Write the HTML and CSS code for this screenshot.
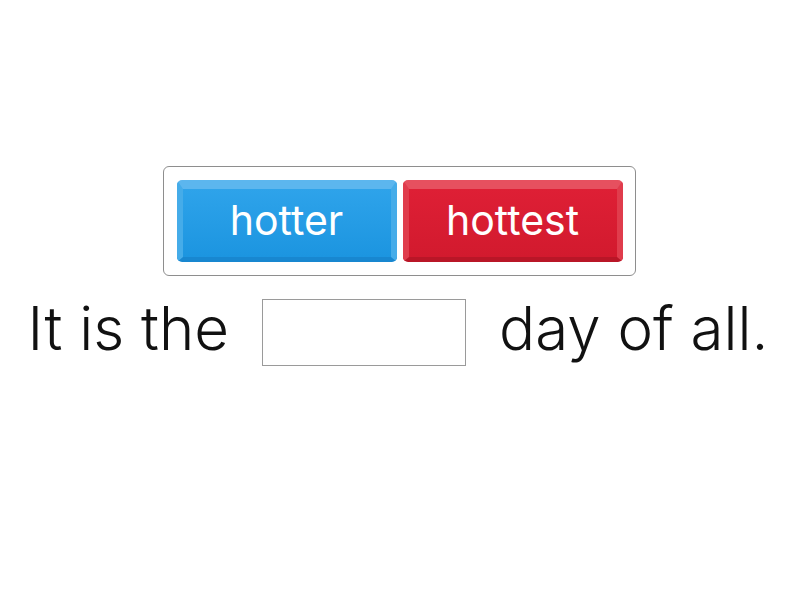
FILE: index.html
```html
<!DOCTYPE html>
<html>
<head>
<meta charset="utf-8">
<link rel="stylesheet" href="styles.css">
</head>
<body>
<main class="page">
  <div class="choices">
    <div class="btn btn-blue"><span>hotter</span></div>
    <div class="btn btn-red"><span>hottest</span></div>
  </div>
  <div class="sentence">
    <span class="word">It is the</span>
    <span class="blank"></span>
    <span class="word">day of all.</span>
  </div>
</main>
</body>
</html>
```
FILE: styles.css
```css
html, body {
  margin: 0;
  padding: 0;
  background: #fff;
}
.page {
  width: 800px;
  height: 600px;
  display: flex;
  flex-direction: column;
  align-items: center;
  padding-top: 166px;
  box-sizing: border-box;
  font-family: "Inter", "Noto Sans", sans-serif;
  font-variant-ligatures: none;
}
.choices {
  display: flex;
  gap: 6px;
  padding: 13px 12px 13px 13px;
  border: 1px solid #8e8e8e;
  border-radius: 6px;
  transform: translateX(-1px);
}
.btn {
  width: 220px;
  height: 82px;
  box-sizing: border-box;
  border-radius: 5px;
  border-style: solid;
  border-width: 9px 6px 5px 6px;
  display: flex;
  align-items: center;
  justify-content: center;
  color: #fff;
  font-size: 41px;
  font-weight: 400;
  padding-bottom: 7px;
}
.btn-blue {
  background: linear-gradient(#2ea3ea, #1c95e0);
  border-color: #5cb6ee #45ace9 #1887d0 #45ace9;
}
.btn-red {
  background: linear-gradient(#de1f35, #d21a2e);
  border-color: #e6505f #e03c4c #b91627 #e03c4c;
}
.sentence {
  display: flex;
  align-items: center;
  margin-top: 16px;
  gap: 33px;
  font-size: 60px;
  font-weight: 350;
  color: #111;
  transform: translateX(-2px);
}
.word {
  padding-bottom: 8px;
}
.blank {
  width: 204px;
  height: 67px;
  box-sizing: border-box;
  border: 1px solid #9a9a9a;
  background: #fff;
}
```
